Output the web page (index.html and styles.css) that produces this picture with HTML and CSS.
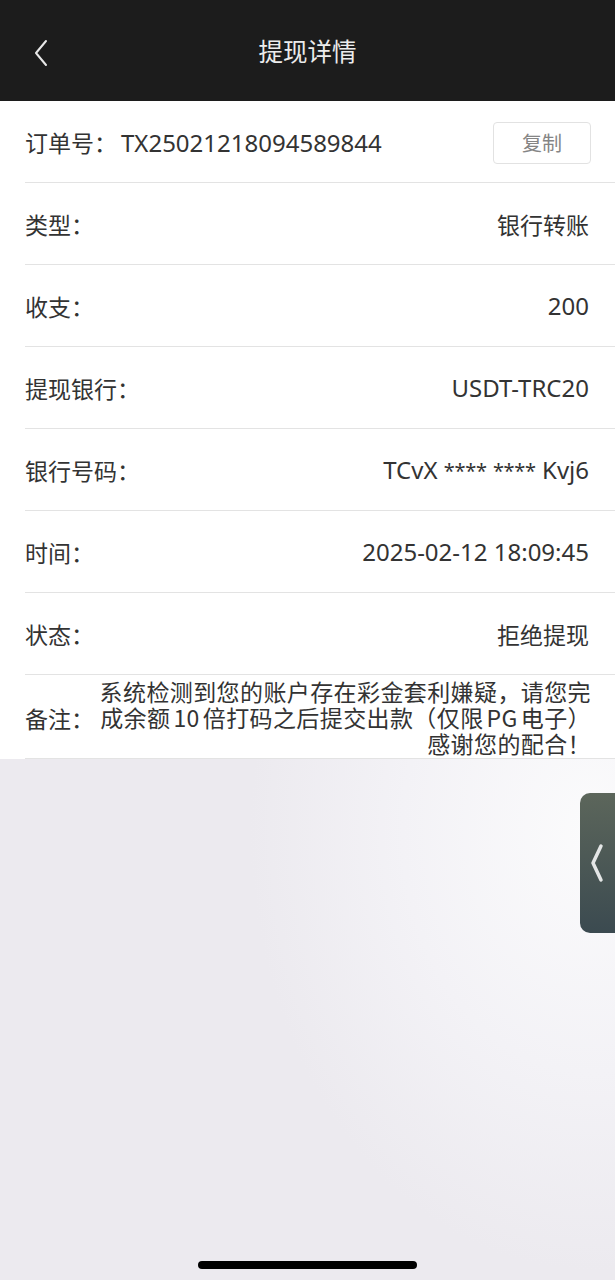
FILE: index.html
```html
<!DOCTYPE html>
<html>
<head>
	<meta charset="utf-8">
	<title>提现详情</title>
	<link rel="stylesheet" href="styles.css">
</head>
<body>
	<div class="topbar">
		<svg class="back" width="14" height="28" viewBox="0 0 14 28"><path d="M12 2 L2 14 L12 26" fill="none" stroke="#e8e8e8" stroke-width="2" stroke-linecap="round" stroke-linejoin="round"/></svg>
		<div class="title">提现详情</div>
	</div>

	<div class="detail">
		<div class="row">
			<div class="label">订单号：<span class="order">TX25021218094589844</span></div>
			<div class="copy">复制</div>
		</div>
		<div class="row">
			<div class="label">类型：</div>
			<div class="value">银行转账</div>
		</div>
		<div class="row">
			<div class="label">收支：</div>
			<div class="value num">200</div>
		</div>
		<div class="row">
			<div class="label">提现银行：</div>
			<div class="value num">USDT-TRC20</div>
		</div>
		<div class="row">
			<div class="label">银行号码：</div>
			<div class="value num">TCvX <span class="mask">****</span> <span class="mask">****</span> Kvj6</div>
		</div>
		<div class="row">
			<div class="label">时间：</div>
			<div class="value num">2025-02-12 18:09:45</div>
		</div>
		<div class="row">
			<div class="label">状态：</div>
			<div class="value">拒绝提现</div>
		</div>
		<div class="row note">
			<div class="label">备注：</div>
			<div class="value">系统检测到您的账户存在彩金套利嫌疑，请您完<br>成余额<span class="gap">10</span>倍打码之后提交出款（仅限<span class="gap">PG</span>电子）<br>感谢您的配合！</div>
		</div>
	</div>

	<div class="side-tab">
		<svg width="14" height="40" viewBox="0 0 14 40"><path d="M11 3 L3 20 L11 37" fill="none" stroke="#e4e6e6" stroke-width="3.5" stroke-linecap="round" stroke-linejoin="round"/></svg>
	</div>

	<div class="home-bar"></div>
</body>
</html>
```

FILE: styles.css
```css
html, body {
	margin: 0;
	padding: 0;
}

body {
	width: 615px;
	height: 1280px;
	position: relative;
	overflow: hidden;
	font-family: "Noto Sans CJK SC", "Noto Sans", sans-serif;
	color: #333;
	background-color: #eceaef;
	background-image: radial-gradient(ellipse 340px 440px at 590px 830px, #fbfbfc 0%, #f3f2f6 55%, #eceaef 100%);
}

.topbar {
	height: 101px;
	background: #1c1c1c;
	display: flex;
	align-items: center;
	justify-content: center;
	position: relative;
}

.topbar .back {
	position: absolute;
	left: 34px;
	top: 39px;
}

.topbar .title {
	color: #ececec;
	font-size: 24.5px;
	margin-top: -1px;
}

.detail {
	background: #fff;
}

.row {
	margin-left: 25px;
	height: 81px;
	border-bottom: 1px solid #e3e3e3;
	display: flex;
	align-items: center;
	justify-content: space-between;
	padding-right: 26px;
	font-size: 23px;
}

.label {
	white-space: nowrap;
}

.order {
	font-family: "Noto Sans", sans-serif;
	font-size: 24px;
	margin-left: 4px;
}

.value {
	text-align: right;
}

.value.num {
	font-family: "Noto Sans", sans-serif;
	font-size: 24px;
}

.mask {
	font-size: 20px;
	letter-spacing: -0.3px;
	vertical-align: 1px;
}

.copy {
	width: 96px;
	height: 40px;
	border: 1px solid #e2e2e2;
	border-radius: 4px;
	display: flex;
	align-items: center;
	justify-content: center;
	font-size: 20px;
	color: #858585;
	margin-right: -2px;
	margin-top: 2px;
}

.note {
	height: 83px;
}

.note .label {
	margin-top: 2px;
}

.note .value {
	flex: 1;
	line-height: 26px;
	letter-spacing: 0.4px;
	margin-right: -2px;
}

.gap {
	margin: 0 3px;
}

.side-tab {
	position: absolute;
	left: 580px;
	top: 793px;
	width: 40px;
	height: 140px;
	border-radius: 10px 0 0 10px;
	background: linear-gradient(#5c665b, #3b4a50);
	display: flex;
	align-items: center;
	padding-left: 10px;
	box-sizing: border-box;
}

.home-bar {
	position: absolute;
	left: 198px;
	top: 1261px;
	width: 219px;
	height: 8px;
	border-radius: 4px;
	background: #000;
}
```
